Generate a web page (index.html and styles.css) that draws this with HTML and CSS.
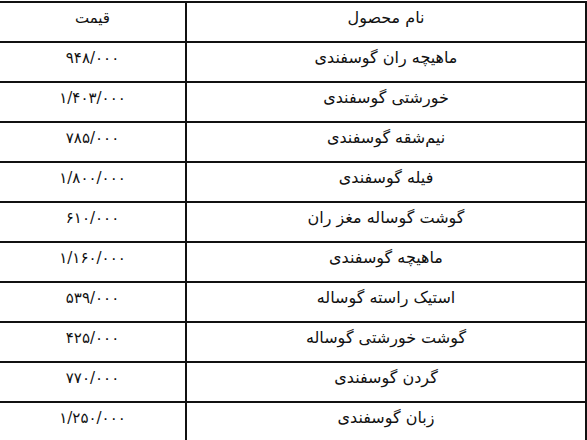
FILE: index.html
```html
<!DOCTYPE html>
<html lang="fa" dir="rtl">
<head>
<meta charset="utf-8">
<link rel="stylesheet" href="styles.css">
</head>
<body>
<table class="price-table">
  <thead>
    <tr><th class="name">نام محصول</th><th class="price">قیمت</th></tr>
  </thead>
  <tbody>
    <tr><td class="name">ماهیچه ران گوسفندی</td><td class="price">۹۴۸/۰۰۰</td></tr>
    <tr><td class="name">خورشتی گوسفندی</td><td class="price">۱/۴۰۳/۰۰۰</td></tr>
    <tr><td class="name">نیم‌شقه گوسفندی</td><td class="price">۷۸۵/۰۰۰</td></tr>
    <tr><td class="name">فیله گوسفندی</td><td class="price">۱/۸۰۰/۰۰۰</td></tr>
    <tr><td class="name">گوشت گوساله مغز ران</td><td class="price">۶۱۰/۰۰۰</td></tr>
    <tr><td class="name">ماهیچه گوسفندی</td><td class="price">۱/۱۶۰/۰۰۰</td></tr>
    <tr><td class="name">استیک راسته گوساله</td><td class="price">۵۳۹/۰۰۰</td></tr>
    <tr><td class="name">گوشت خورشتی گوساله</td><td class="price">۴۲۵/۰۰۰</td></tr>
    <tr><td class="name">گردن گوسفندی</td><td class="price">۷۷۰/۰۰۰</td></tr>
    <tr><td class="name">زبان گوسفندی</td><td class="price">۱/۲۵۰/۰۰۰</td></tr>
  </tbody>
</table>
</body>
</html>
```
FILE: styles.css
```css
html, body {
  margin: 0;
  padding: 0;
  background: #fff;
}
body {
  padding-top: 1px;
  font-family: "DejaVu Sans", sans-serif;
  color: #111;
  overflow: hidden;
}
.price-table {
  width: 587px;
  border-collapse: collapse;
  table-layout: fixed;
}
.price-table th,
.price-table td {
  border: 2px solid #111;
  height: 40px;
  box-sizing: border-box;
  padding: 0 0 8px;
  text-align: center;
  vertical-align: middle;
  font-weight: normal;
  font-size: 16px;
  line-height: 20px;
}
.price-table .name {
  width: 400px;
}
.price-table .price {
  width: 187px;
  font-size: 15px;
}
```
